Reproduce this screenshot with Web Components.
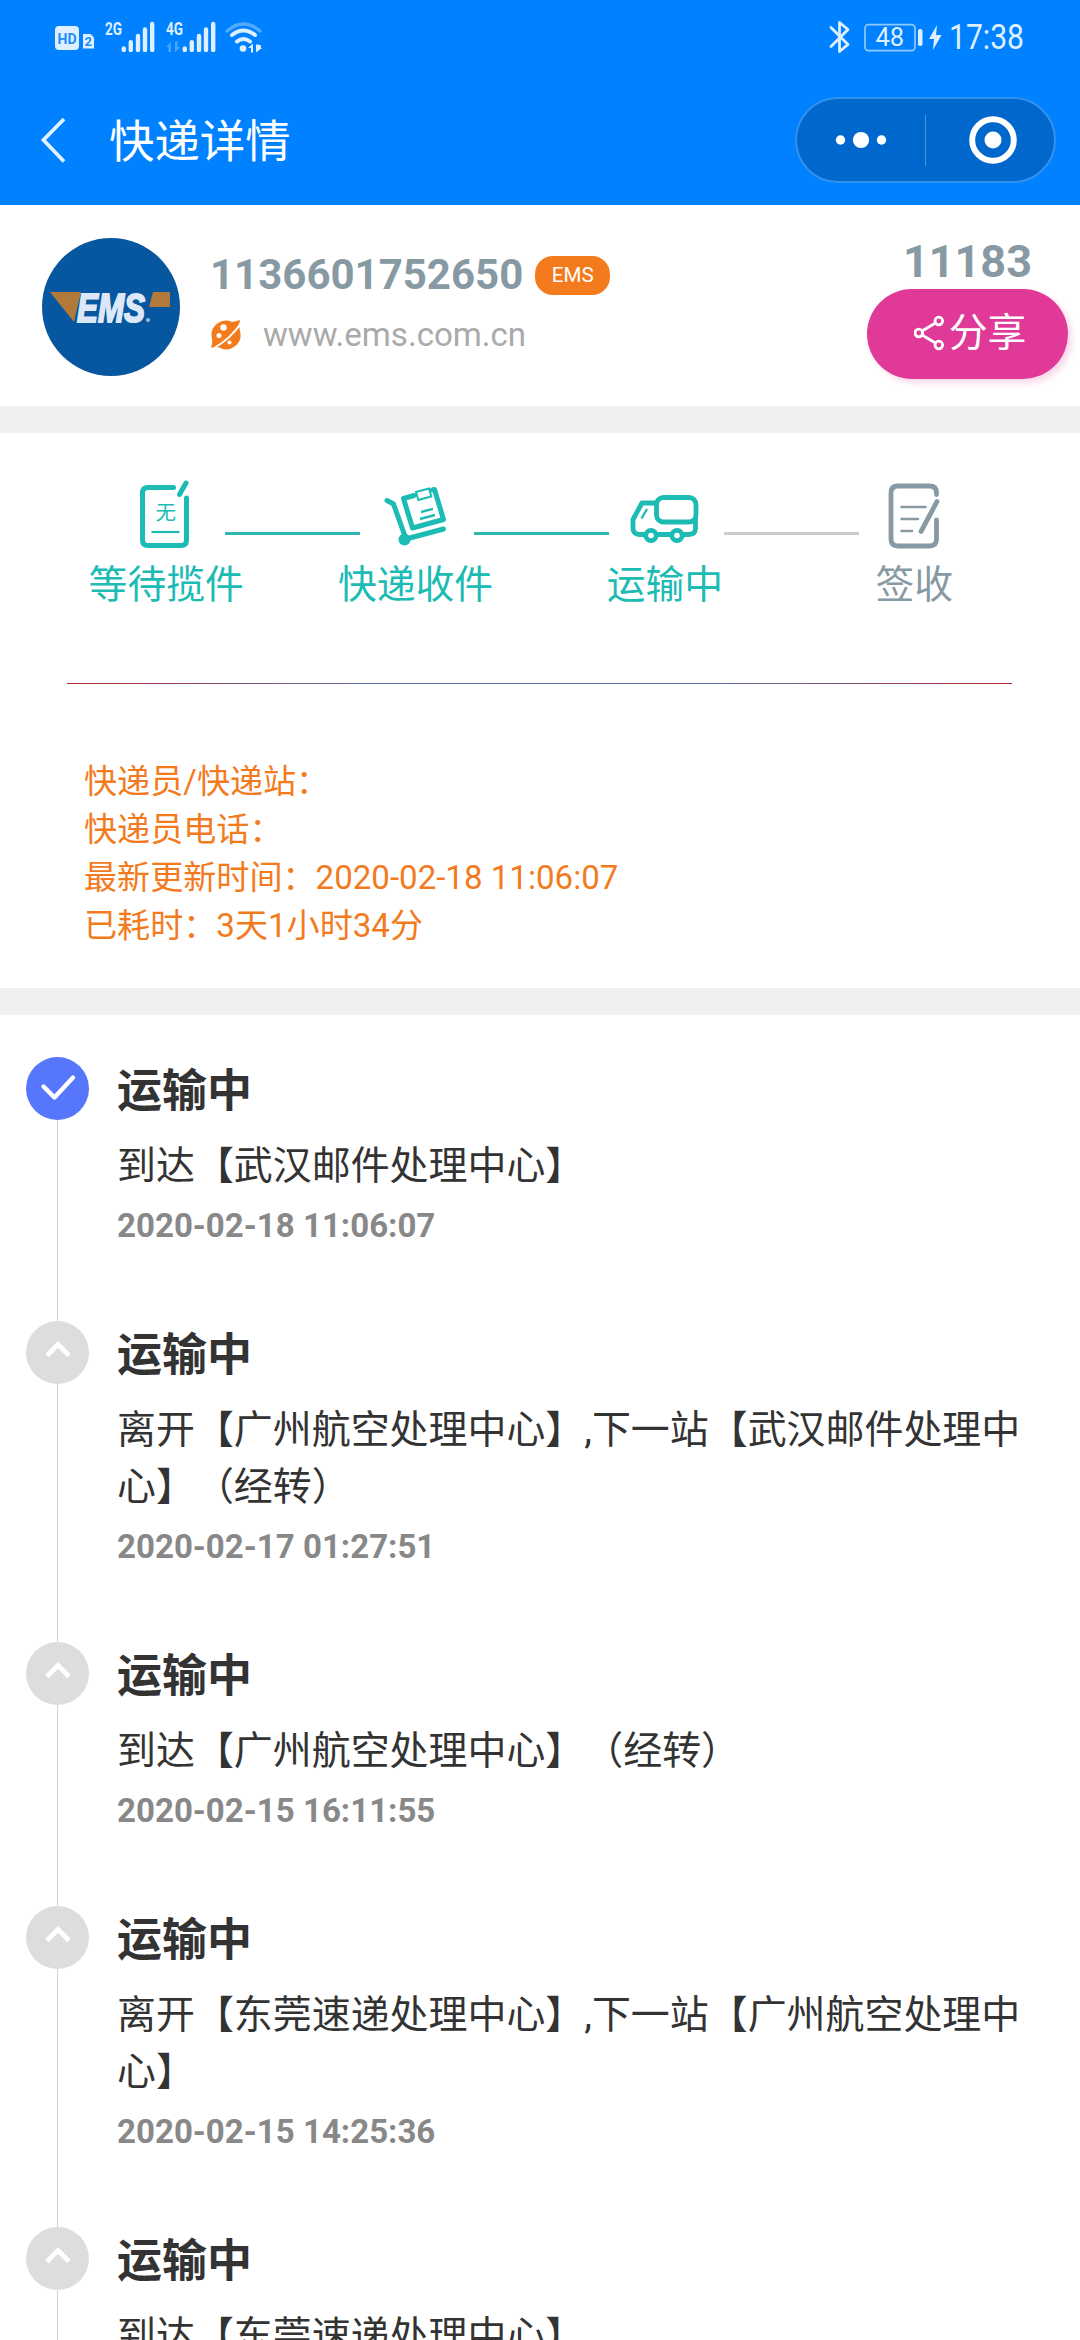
<!DOCTYPE html>
<html lang="zh-CN">
<head>
<meta charset="utf-8">
<title>快递详情</title>
<style>
    body{
        margin: 0;
        width: 1080px;
        height: 2340px;
        overflow: hidden;
        background: #f0f0f0;
        color: #333;
        font-family: Roboto, "Noto Sans CJK SC", sans-serif;
        text-spacing-trim: space-all;
    }
</style>
</head>
<body>
<express-page></express-page>

<script>
function define(name, html){
    customElements.define(name, class extends HTMLElement {
        connectedCallback(){
            if (this.shadowRoot) return;
            const shadow = this.attachShadow({ mode: 'open' });
            shadow.innerHTML = typeof html == 'function' ? html(this) : html;
        }
    });
}

/* phone status bar */
var signal = function(label, data){
    return `
    <svg width="50" height="40" viewBox="0 -8 50 40">
        <text x="0" y="15" textLength="17" lengthAdjust="spacingAndGlyphs" font-size="18" font-weight="bold" fill="#def0ff">`+label+`</text>
        <g stroke="#def0ff" stroke-width="4.4" stroke-linecap="round">
            <path d="M18.8 28.500v1.5M25.8 22.300v7.700M33 16v14M40 9.500v20.500M47.200 4v26"/>
        </g>
        `+(data ? '<path d="M0 27l5-5v10h-2.500v-5zM9 21.500h2.500v5.500h3l-5.500 5z" fill="#4ba6ff"/>' : '')+`
    </svg>`;
}

define('status-bar', `
<style>
    :host{
        display: flex;
        justify-content: space-between;
        box-sizing: border-box;
        height: 75px;
        padding: 12px 56px 0 55px;
        color: #def0ff;
    }
    .side{
        display: flex;
        align-items: flex-start;
    }
    svg{ display: block; font-family: Roboto, sans-serif; }
    .hd{ margin: 8px 11px 0 0; }
    .sig{ margin-right: 11px; }
    .wifi{ margin: 8px 0 0 -2px; }
    .battery{ margin-top: 8px; }
    .clock{
        margin: 8px 0 0 7.500px;
        font-size: 35px;
        line-height: 36px;
        transform: scaleX(.86);
        transform-origin: 100% 50%;
        width: 74px;
        display: flex;
        justify-content: flex-end;
    }
</style>
<div class="side">
    <svg class="hd" width="39" height="32" viewBox="0 0 39 32">
        <rect y="6" width="24" height="24" rx="4" fill="#def0ff"/>
        <text x="2.500" y="23.500" textLength="19" lengthAdjust="spacingAndGlyphs" font-size="15.500" font-weight="bold" fill="#1c8cff">HD</text>
        <path d="M28 14h7.500l3.500 3.500v11h-11z" fill="#def0ff"/>
        <text x="29.500" y="26.300" font-size="13" font-weight="bold" fill="#1c8cff">2</text>
    </svg>
    <div class="sig">`+signal('2G', false)+`</div>
    <div class="sig">`+signal('4G', true)+`</div>
    <svg class="wifi" width="38" height="34" viewBox="0 0 38 34" fill="none" stroke-linecap="round" stroke-width="4">
        <path d="M2 11q16.500-14 33 0" stroke="#52aaff" stroke-width="3.400"/>
        <path d="M7 15q11.500-9 23 0M12 21.500q6.500-5 13 0" stroke="#def0ff"/>
        <circle cx="18" cy="28.500" r="3.300" fill="#def0ff"/>
        <path d="M23 28l5-4.500v9h-2v-4.500zM31 24.500h2l3 1v2.500h1l-6 4.500z" fill="#def0ff"/>
    </svg>
</div>
<div class="side">
    <svg class="battery" width="114" height="34" viewBox="0 0 114 34">
        <path d="M2 7.500l17 17-8.500 7v-29l8.500 7-17 17" fill="none" stroke="#def0ff" stroke-width="2.800" stroke-linejoin="round" stroke-linecap="round"/>
        <rect x="36" y="4.600" width="50" height="26" rx="3.500" fill="none" stroke="#8fcaff" stroke-width="1.700"/>
        <rect x="89" y="9" width="4.500" height="17" rx="2" fill="#def0ff"/>
        <text x="46.500" y="26" font-size="25.500" fill="#def0ff">48</text>
        <path d="M108 5l-8 14h5l-1 11 8.500-15h-5.500z" fill="#def0ff"/>
    </svg>
    <div class="clock">17:38</div>
</div>
`);

define('nav-bar', `
<style>
    :host{
        display: flex;
        align-items: center;
        box-sizing: border-box;
        height: 130px;
        padding: 0 24px 0 40px;
        color: #fff;
    }
    svg{ display: block; }
    .title{
        flex: 1;
        margin: 6px 0 0 41px;
        font-size: 45.400px;
        line-height: 60px;
    }
    .capsule{
        display: flex;
        align-items: center;
        box-sizing: border-box;
        width: 261px;
        height: 86px;
        border: 2px solid #3391ee;
        border-radius: 43px;
        background: #0067cc;
    }
    .capsule div{
        flex: 1;
        display: flex;
        justify-content: center;
    }
    .capsule i{
        width: 1px;
        height: 51px;
        background: #4d95db;
    }
</style>
<svg width="28" height="50" viewBox="0 0 28 50"><path d="M24 4L3.500 25 24 46.500" fill="none" stroke="#e0f1ff" stroke-width="3.800"/></svg>
<div class="title"><slot></slot></div>
<div class="capsule">
    <div>
        <svg width="52" height="20" viewBox="0 0 52 20" fill="#fff"><circle cx="5.500" cy="10" r="4.700"/><circle cx="26" cy="10" r="8.100"/><circle cx="46.500" cy="10" r="4.700"/></svg>
    </div>
    <i></i>
    <div>
        <svg width="54" height="48" viewBox="0 0 54 48"><circle cx="30" cy="24" r="20.800" fill="none" stroke="#fff" stroke-width="6"/><circle cx="30" cy="24" r="8.500" fill="#fff"/></svg>
    </div>
</div>
`);

define('ems-logo', `
<style>
    :host{
        display: block;
        width: 138px;
        height: 138px;
        border-radius: 50%;
        background: #06579f;
        overflow: hidden;
    }
    svg{ display: block; font-family: "Liberation Sans", sans-serif; }
</style>
<svg width="138" height="138" viewBox="0 0 138 138">
    <path d="M8 54h31l-7 30z" fill="#b17a3a"/>
    <path d="M111 54h17v15h-21z" fill="#b17a3a"/>
    <text x="35" y="83.500" font-size="41" font-weight="bold" font-style="italic" textLength="68" lengthAdjust="spacingAndGlyphs" fill="#dce8f7" stroke="#dce8f7" stroke-width="2">EMS</text>
    <circle cx="106" cy="82" r="2" fill="#9dbce0"/>
</svg>
`);

define('share-button', `
<style>
    :host{
        display: flex;
        align-items: center;
        justify-content: center;
        box-sizing: border-box;
        width: 201px;
        height: 90px;
        padding: 0 0 3px 5px;
        border-radius: 45px;
        background: #e03997;
        box-shadow: 4px 4px 6px rgba(224, 57, 151, .2);
        color: #fff;
        font-size: 38.800px;
        line-height: 56px;
    }
    svg{ margin-right: 5px; }
</style>
<svg width="30" height="36" viewBox="0 0 30 36" fill="none" stroke="#fff" stroke-width="2.800">
    <circle cx="4.800" cy="18" r="3.800"/><circle cx="24.800" cy="6" r="3.800"/><circle cx="24.800" cy="30" r="3.800"/>
    <path d="M8 16L21.500 8M8 20l13.500 8"/>
</svg>
<slot></slot>
`);

define('carrier-card', `
<style>
    :host{
        display: flex;
        box-sizing: border-box;
        height: 201px;
        padding: 33px 12px 0 42px;
        background: #fff;
        color: #8799a3;
    }
    .info{
        flex: 1;
        margin-left: 30px;
        padding-top: 7px;
    }
    .row{
        display: flex;
        align-items: center;
    }
    .number{
        font-size: 42px;
        font-weight: bold;
        line-height: 60px;
    }
    .tag{
        margin-left: 12px;
        width: 75px;
        height: 39px;
        border-radius: 18px;
        background: #f37b1d;
        color: #fff;
        font-size: 20.600px;
        line-height: 39px;
        text-align: center;
    }
    .row svg{ margin: -1px 0 0 1px; }
    .site{
        margin-left: 22px;
        font-size: 33.100px;
        line-height: 60px;
        color: #aaa;
    }
    .contact{
        display: flex;
        flex-direction: column;
        align-items: flex-end;
    }
    .phone{
        margin-right: 36px;
        font-size: 45px;
        font-weight: bold;
        line-height: 48px;
        padding-bottom: 3px;
    }
</style>
<ems-logo></ems-logo>
<div class="info">
    <div class="row"><span class="number">1136601752650</span><span class="tag">EMS</span></div>
    <div class="row">
        <svg width="30" height="30" viewBox="0 0 30 30">
            <path d="M29 0Q27.500 6 29 11A14.500 14.500 0 0 1 8 27.500Q4 26.500 0 28Q2 22 .8 18A14.500 14.500 0 0 1 21 2Q25 1.500 29 0z" fill="#f37b1d"/>
            <path d="M30 3C23 14 15 21 4 27.500" fill="none" stroke="#fff" stroke-width="2"/>
            <g fill="#fff"><circle cx="12.500" cy="7.500" r="3.200"/><circle cx="8" cy="15.500" r="2.500"/><circle cx="18.500" cy="22.500" r="2"/></g>
        </svg>
        <span class="site">www.ems.com.cn</span>
    </div>
</div>
<div class="contact">
    <div class="phone">11183</div>
    <share-button>分享</share-button>
</div>
`);

/* delivery steps */
var step_icons = {
    wait: `<g transform="translate(0 3)"><g stroke-width="5" stroke-linecap="round">
            <path d="M34.500 11.500H9q-5.500 0-5.500 5.500V64q0 5.500 5.500 5.500h33q5.500 0 5.500-5.500V22"/>
            <path d="M40.500 18.500L47 7" />
            <path d="M12.500 56h28" stroke-width="2.200" stroke-linecap="butt"/></g>
            <text x="16.500" y="44" font-size="20.500" fill="currentColor" stroke="none">无</text></g>`,
    pick: `<g transform="translate(0 3)"><g stroke-width="5" stroke-linecap="round" stroke-linejoin="round">
            <path d="M-2 24.500l6.500 3.500L17 63l37.500-10"/>
            <circle cx="15.500" cy="63.500" r="3.500" fill="currentColor"/>
            <path d="M25 19.500L14.500 22.500 23.500 52l31-8.500-9-30-2 .5"/></g>
            <path d="M27 16l13-3.500 2.300 8-13 3.500z" stroke-width="2"/>
            <path d="M32 36l12-3.200M31 43l15-4" stroke-width="2.400"/></g>`,
    move: `<g stroke-width="4.800" stroke-linejoin="round">
            <path d="M9 61.500H1.500q-6.500 0-6.500-6.500V46.500L4 30h15"/>
            <path d="M20 61.500h13M46 61.500h4.500q7 0 7-6V44"/>
            <rect x="18.500" y="24.500" width="39.500" height="24.500" rx="7"/>
            <circle cx="13" cy="62.500" r="5.200"/><circle cx="39" cy="62.500" r="5.200"/></g>
            <path d="M9 36L3.500 45.500" stroke-width="2.400"/>`,
    sign: `<g transform="translate(0 3)"><g stroke-width="4.800" stroke-linecap="round">
            <path d="M49.500 18.500V17q0-7-7-7H11q-7 0-7 7v46q0 7 7 7h31.500q7 0 7-7V44"/>
            <path d="M50 25.500L34 55.500"/></g>
            <path d="M14.500 31h24M14.500 43h16.500M14.500 55h10.500" stroke-width="2.400" stroke-linecap="round"/></g>`
};

define('delivery-step', function(el){
    const icon = el.getAttribute('icon');
    return `
<style>
    :host{
        flex: 1;
        display: flex;
        flex-direction: column;
        align-items: center;
        position: relative;
        color: #1cbbb4;
        font-size: 38.800px;
        line-height: 56px;
    }
    :host([pending]){ color: #8799a3; }
    svg{
        display: block;
        overflow: visible;
        margin-bottom: 4px;
        font-family: "Noto Sans CJK SC", sans-serif;
    }
    /* connector laid over the gap before the step */
    :host([line])::before{
        content: "";
        position: absolute;
        left: -66px;
        top: 59px;
        width: 135px;
        height: 3px;
        background: #2fb8b2;
    }
    :host([line][pending])::before{ background: #ccc; }
</style>
<svg width="54" height="80" viewBox="0 0 54 80" fill="none" stroke="currentColor">`+step_icons[icon]+`</svg>
<slot></slot>
`;
});

define('delivery-steps', `
<style>
    :host{
        display: flex;
        height: 139px;
        padding: 0 41px 0 41.500px;
    }
</style>
<slot></slot>
`);

define('courier-info', `
<style>
    :host{
        display: block;
        margin: 71px 68px 0 67px;
        padding: 74px 17px 0;
        border-top: 1px solid;
        border-image: linear-gradient(90deg, #b3262b, #5a72b0 33%, #5a72b0 67%, #b3262b) 1;
        color: #f37b1d;
        font-size: 33.100px;
        line-height: 48.100px;
    }
    ::slotted(div){ white-space: nowrap; }
</style>
<slot></slot>
`);

define('progress-card', `
<style>
    :host{
        display: block;
        box-sizing: border-box;
        height: 555px;
        margin-top: 27px;
        padding-top: 40px;
        background: #fff;
    }
</style>
<slot></slot>
`);

define('track-item', function(el){
    const current = el.hasAttribute('current');
    return `
<style>
    :host{
        display: grid;
        grid-template-columns: 63px 1fr;
        column-gap: 28.500px;
    }
    .rail{
        display: flex;
        flex-direction: column;
        align-items: center;
    }
    .rail svg{ display: block; flex: none; }
    .rail i{
        flex: 1;
        width: 1px;
        margin-left: 1px;
        background: #d4d4d4;
    }
    .content{ padding: 2px 0 65px; }
    h3{
        margin: 0;
        font-size: 45px;
        line-height: 66px;
        color: #333;
    }
    p{
        margin: 13px 0 0;
        font-size: 38.950px;
        line-height: 57px;
    }
    time{
        display: block;
        margin-top: 1px;
        font-size: 33.050px;
        font-weight: bold;
        line-height: 60px;
        color: #888;
    }
</style>
<div class="rail">
    <svg width="63" height="63" viewBox="0 0 63 63" fill="none" stroke="#fff">
        <circle cx="31.500" cy="31.500" r="31.500" stroke="none" fill="`+(current ? '#5677fc' : '#ddd')+`"/>
        `+(current
            ? '<path d="M17.500 29.500L28.500 40.500 47 20.500" stroke-width="4.400" stroke-linecap="round" stroke-linejoin="round"/>'
            : '<path d="M21 34.500l11-11 11 11" stroke-width="4.800"/>')+`
    </svg>
    <i></i>
</div>
<div class="content">
    <h3>`+el.getAttribute('status')+`</h3>
    <p><slot></slot></p>
    <time>`+el.getAttribute('time')+`</time>
</div>
`;
});

define('track-list', `
<style>
    :host{
        display: block;
        box-sizing: border-box;
        height: 1325px;
        overflow: hidden;
        margin-top: 27px;
        padding: 42px 42px 0 25.500px;
        background: #fff;
    }
</style>
<slot></slot>
`);

define('express-page', `
<style>
    :host{ display: block; }
    header{ height: 205px; background: #0081ff; }
</style>
<header>
    <status-bar></status-bar>
    <nav-bar>快递详情</nav-bar>
</header>
<carrier-card></carrier-card>
<progress-card>
    <delivery-steps>
        <delivery-step icon="wait">等待揽件</delivery-step>
        <delivery-step icon="pick" line>快递收件</delivery-step>
        <delivery-step icon="move" line>运输中</delivery-step>
        <delivery-step icon="sign" line pending>签收</delivery-step>
    </delivery-steps>
    <courier-info>
        <div>快递员/快递站：</div>
        <div>快递员电话：</div>
        <div>最新更新时间：2020-02-18 11:06:07</div>
        <div>已耗时：3天1小时34分</div>
    </courier-info>
</progress-card>
<track-list>
    <track-item current status="运输中" time="2020-02-18 11:06:07">到达【武汉邮件处理中心】</track-item>
    <track-item status="运输中" time="2020-02-17 01:27:51">离开【广州航空处理中心】,下一站【武汉邮件处理中心】（经转）</track-item>
    <track-item status="运输中" time="2020-02-15 16:11:55">到达【广州航空处理中心】（经转）</track-item>
    <track-item status="运输中" time="2020-02-15 14:25:36">离开【东莞速递处理中心】,下一站【广州航空处理中心】</track-item>
    <track-item status="运输中" time="">到达【东莞速递处理中心】</track-item>
</track-list>
`);
</script>
</body>
</html>
